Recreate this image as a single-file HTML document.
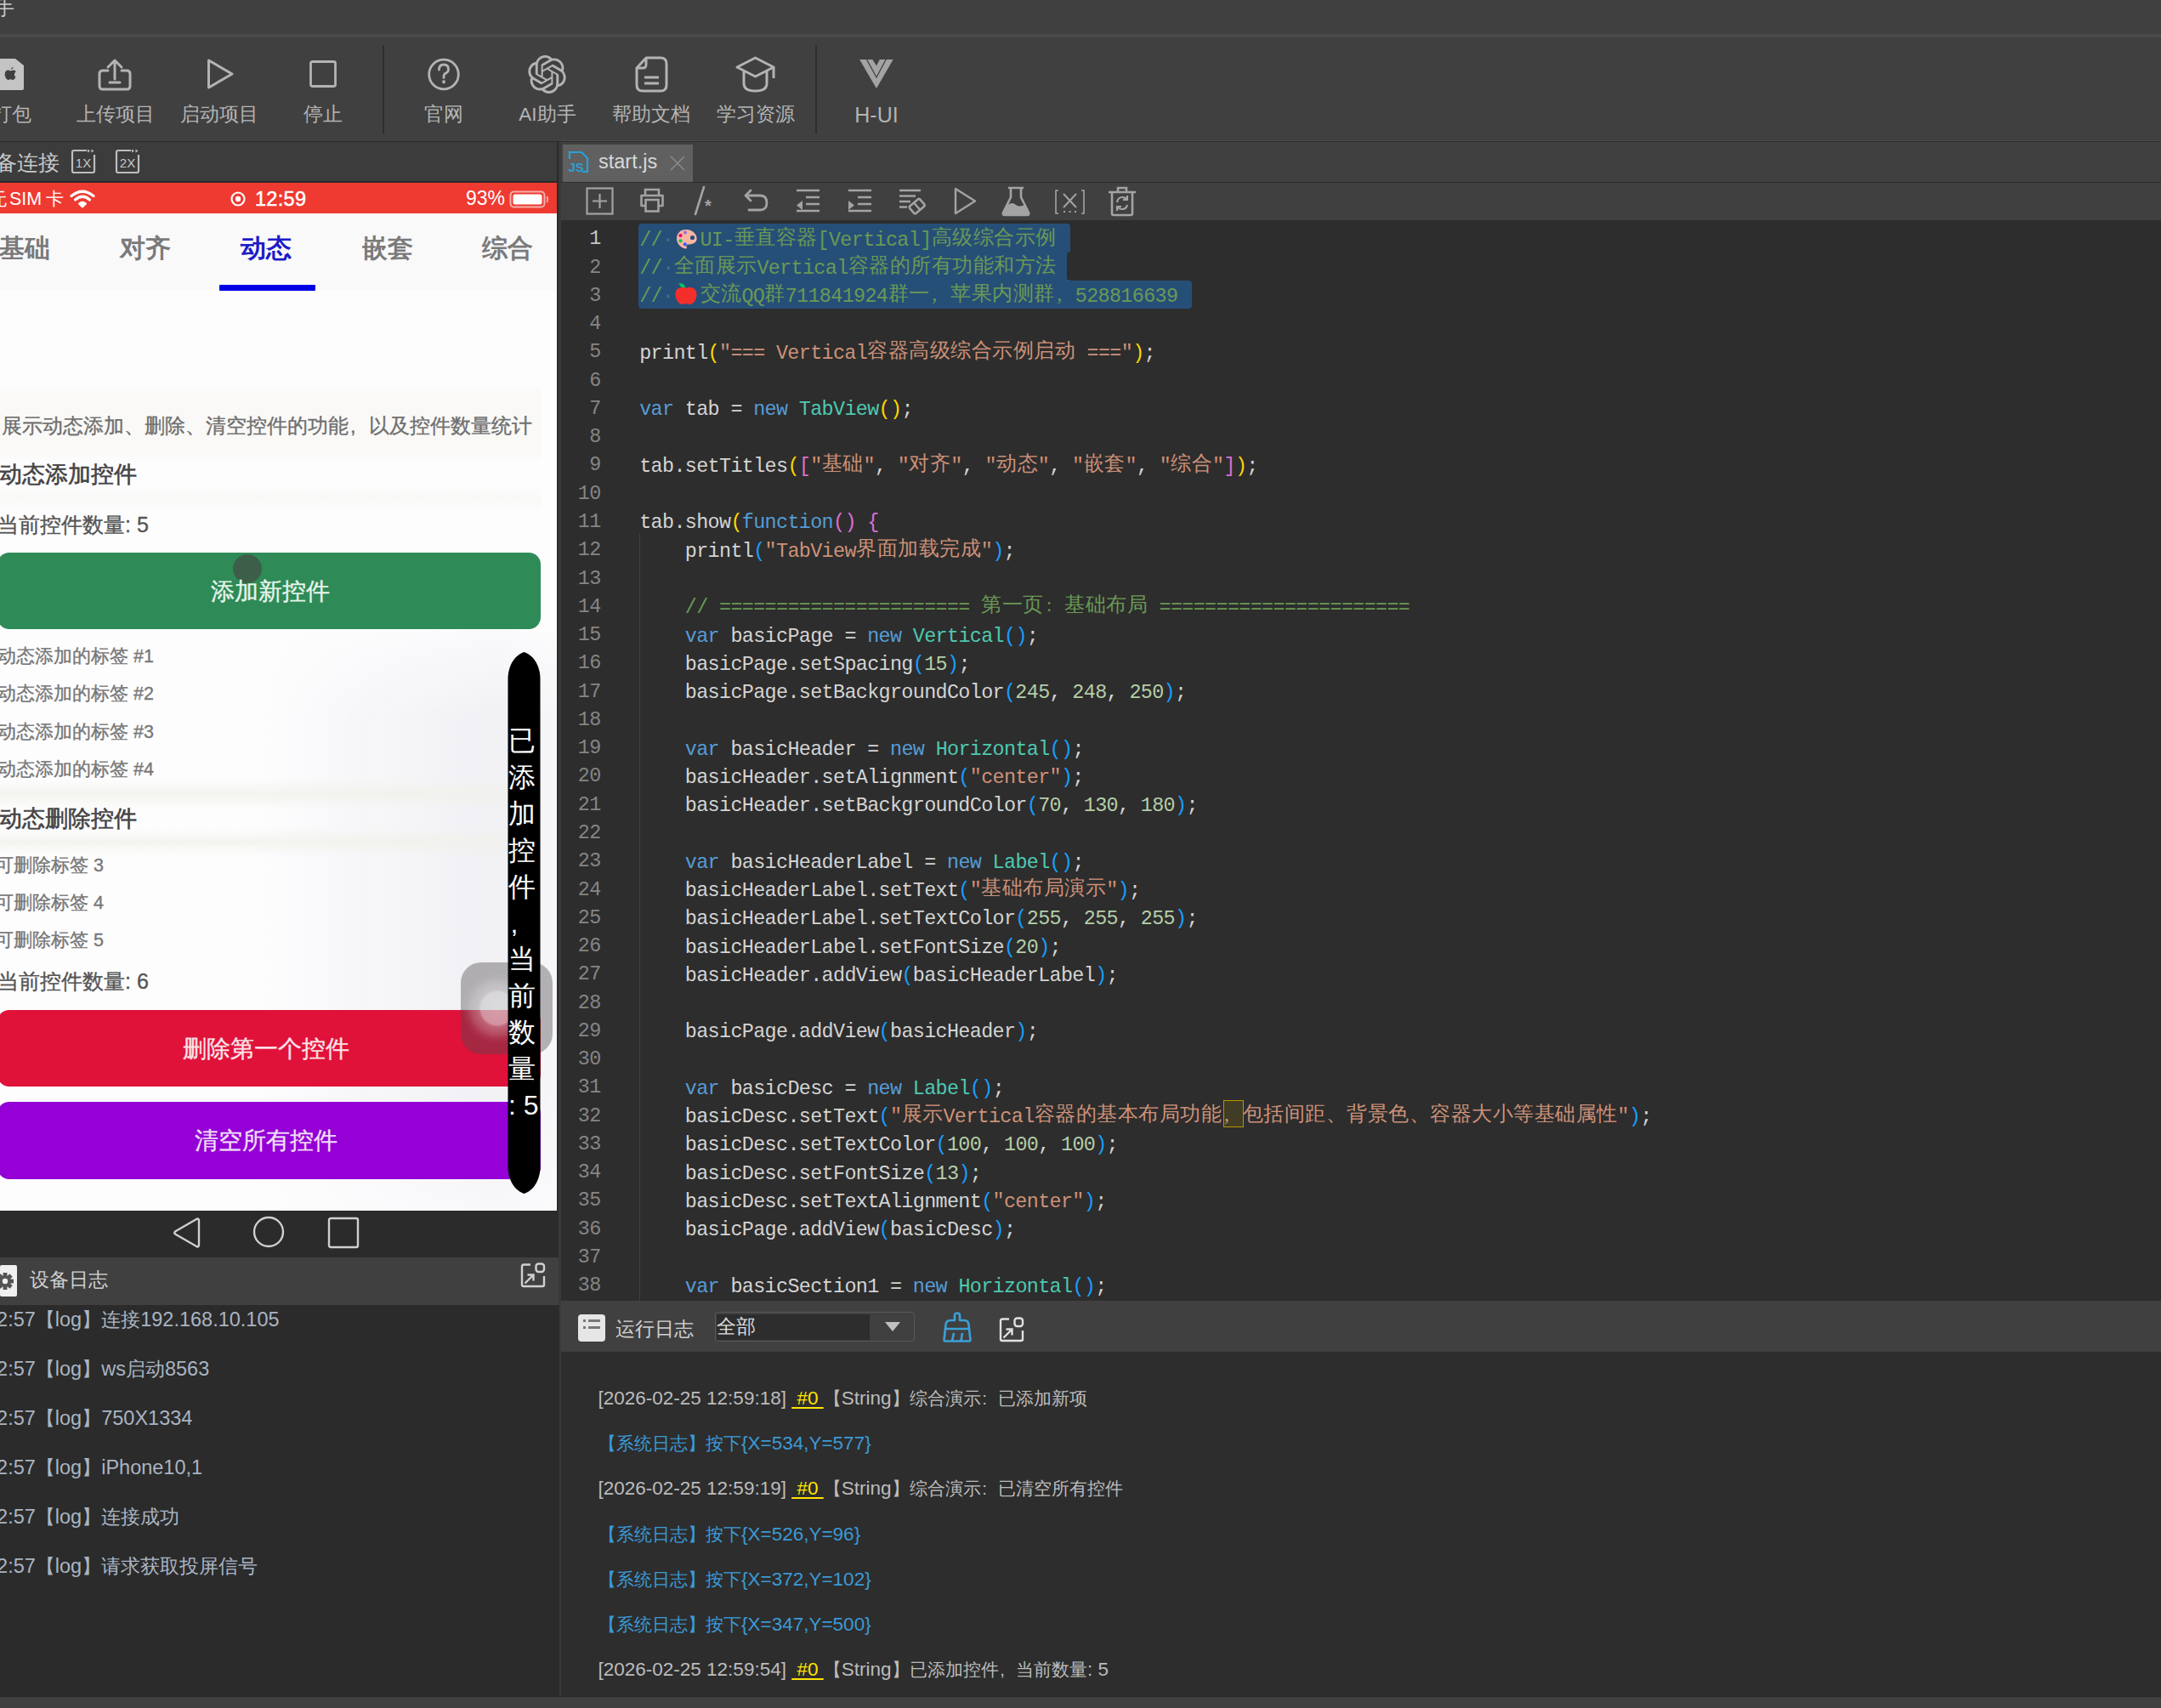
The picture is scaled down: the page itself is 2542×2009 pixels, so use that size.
<!DOCTYPE html>
<html><head><meta charset="utf-8"><style>
*{margin:0;padding:0;box-sizing:border-box}
html,body{width:2542px;height:2009px;overflow:hidden;background:#2d2d2d}
body{position:relative;font-family:"Liberation Sans",sans-serif}
.abs{position:absolute;display:block}
.ui{font-family:"Liberation Sans",sans-serif;white-space:nowrap}
.tlab{position:absolute;top:117.5px;width:160px;text-align:center;font-size:22.5px;line-height:34px;color:#b4b4b4;white-space:nowrap}
.ln{position:absolute;left:661px;width:45.6px;margin-top:2.3px;text-align:right;font-family:"Liberation Mono",monospace;font-size:23.4px;letter-spacing:-0.64px;line-height:33.27px;height:33.27px;color:#858585}
.ln.cur{color:#c6c6c6}
.cl{position:absolute;left:752.2px;margin-top:3.8px;font-family:"Liberation Mono",monospace;font-size:23.4px;letter-spacing:-0.64px;line-height:33.27px;height:33.27px;white-space:pre;color:#d4d4d4}
.cl .k{font-family:"Liberation Serif",serif;font-size:24px;letter-spacing:0;display:inline-block;height:33.27px;vertical-align:top;line-height:33.27px;position:relative;top:-4px}
.cl .k i.p{text-align:left;padding-left:3px}
.cl .k i{display:inline-block;width:24.5px;height:33.27px;line-height:33.27px;vertical-align:top;text-align:center;font-style:normal}
.cl .ws{color:#4d6a85;display:inline-block;width:13.4px;text-align:left;letter-spacing:0}
.cl .emo{display:inline-block;width:31px;font-size:21px;text-align:left;vertical-align:top;line-height:33px;padding-left:2px}
.rlog .c{font-size:0.915em}
.dlog .c{font-size:0.96em}
.rlog{position:absolute;font-size:22.5px;line-height:40px;color:#bcbcbc;white-space:nowrap}
.rlog.sys{color:#3b9ad6}
.rlog .tag{color:#ffe300;text-decoration:underline;text-underline-offset:3px}
.dlog{position:absolute;left:-17px;font-size:23.5px;line-height:40px;color:#a9b4c2;white-space:nowrap}
.pp{display:inline-block;width:1em;text-align:left;padding-left:0.08em}
.ptxt{position:absolute;white-space:nowrap;left:0;-webkit-text-stroke:0.35px currentColor}
</style></head><body>
<!-- title bar -->
<div class="abs" style="left:0;top:0;width:2542px;height:40px;background:#404040"></div>
<div class="abs ui" style="left:-6px;top:-8px;font-size:23px;line-height:34px;color:#c8c8c8">手</div>
<div class="abs" style="left:0;top:40px;width:2542px;height:4px;background:#4a4a4a"></div>
<!-- toolbar -->
<div class="abs" style="left:0;top:44px;width:2542px;height:122px;background:#404040"></div>
<div class="abs" style="left:450px;top:53px;width:2px;height:104px;background:#2e2e2e"></div>
<div class="abs" style="left:959px;top:53px;width:2px;height:104px;background:#2e2e2e"></div>
<svg class="abs" style="left:-10px;top:69px" width="40" height="37" viewBox="0 0 40 37" ><path d="M0 2 Q0 0 2 0 L28 0 L38 8 L38 35 Q38 37 36 37 L2 37 Q0 37 0 35 Z" fill="#c4c4c4"/><g transform="translate(15.5 10) scale(1.25)"><path d="M8.2 0 c-1 0.1 -2.2 0.7 -2.6 1.9 c1.1 0.1 2.2 -0.6 2.6 -1.9z M10.4 9 c-0.5 1.3 -1.4 2.9 -2.6 2.9 c-0.9 0 -1.2 -0.6 -2.3 -0.6 c-1.1 0 -1.4 0.6 -2.3 0.6 c-1.3 0 -3.1 -2.6 -3.1 -5.3 c0 -2.5 1.6 -3.8 3.1 -3.8 c0.9 0 1.7 0.6 2.3 0.6 c0.6 0 1.4 -0.7 2.5 -0.7 c0.5 0 1.9 0.1 2.7 1.4 c-2.2 1.3 -1.8 4.3 -0.3 4.9z" fill="#404040"/></g></svg>
<svg class="abs" style="left:114px;top:68px" width="42" height="40" viewBox="0 0 42 40" ><g fill="none" stroke="#b3b3b3" stroke-width="3" stroke-linecap="round" stroke-linejoin="round"><path d="M13 15 H7 Q3 15 3 19 V33 Q3 37 7 37 H35 Q39 37 39 33 V19 Q39 15 35 15 H29"/><path d="M21 25 V4 M13 11 L21 3 L29 11"/><path d="M15 29 H27"/></g></svg>
<svg class="abs" style="left:240px;top:66px" width="38" height="42" viewBox="0 0 38 42" ><path d="M5.5 5 L33 21 L5.5 37 Z" fill="none" stroke="#b3b3b3" stroke-width="3" stroke-linejoin="round"/></svg>
<svg class="abs" style="left:362px;top:70px" width="36" height="36" viewBox="0 0 36 36" ><rect x="3.5" y="2.5" width="29" height="29" rx="2" fill="none" stroke="#b3b3b3" stroke-width="2.8"/></svg>
<svg class="abs" style="left:501px;top:66px" width="42" height="42" viewBox="0 0 42 42" ><circle cx="21" cy="21.5" r="17.3" fill="none" stroke="#b3b3b3" stroke-width="2.8"/><path d="M15.5 16 Q15.5 10 21 10 Q26.5 10 26.5 15.5 Q26.5 19 22.5 20.5 Q21 21.5 21 24 V25.5" fill="none" stroke="#b3b3b3" stroke-width="2.8" stroke-linecap="round"/><rect x="19.3" y="28.5" width="3.4" height="3.6" fill="#b3b3b3"/></svg>
<svg class="abs" style="left:621px;top:65px" width="45" height="45" viewBox="0 0 24 24" ><path fill="#b3b3b3" d="M22.2819 9.8211a5.9847 5.9847 0 0 0-.5157-4.9108 6.0462 6.0462 0 0 0-6.5098-2.9A6.0651 6.0651 0 0 0 4.9807 4.1818a5.9847 5.9847 0 0 0-3.9977 2.9 6.0462 6.0462 0 0 0 .7427 7.0966 5.98 5.98 0 0 0 .511 4.9107 6.051 6.051 0 0 0 6.5146 2.9001A5.9847 5.9847 0 0 0 13.2599 24a6.0557 6.0557 0 0 0 5.7718-4.2058 5.9894 5.9894 0 0 0 3.9977-2.9001 6.0557 6.0557 0 0 0-.7475-7.0729zm-9.022 12.6081a4.4755 4.4755 0 0 1-2.8764-1.0408l.1419-.0804 4.7783-2.7582a.7948.7948 0 0 0 .3927-.6813v-6.7369l2.02 1.1686a.071.071 0 0 1 .038.052v5.5826a4.504 4.504 0 0 1-4.4945 4.4944zm-9.6607-4.1254a4.4708 4.4708 0 0 1-.5346-3.0137l.142.0852 4.783 2.7582a.7712.7712 0 0 0 .7806 0l5.8428-3.3685v2.3324a.0804.0804 0 0 1-.0332.0615L9.74 19.9502a4.4992 4.4992 0 0 1-6.1408-1.6464zM2.3408 7.8956a4.485 4.485 0 0 1 2.3655-1.9728V11.6a.7664.7664 0 0 0 .3879.6765l5.8144 3.3543-2.0201 1.1685a.0757.0757 0 0 1-.071 0l-4.8303-2.7865A4.504 4.504 0 0 1 2.3408 7.872zm16.5963 3.8558L13.1038 8.364 15.1192 7.2a.0757.0757 0 0 1 .071 0l4.8303 2.7913a4.4944 4.4944 0 0 1-.6765 8.1042v-5.6772a.79.79 0 0 0-.407-.667zm2.0107-3.0231l-.142-.0852-4.7735-2.7818a.7759.7759 0 0 0-.7854 0L9.409 9.2297V6.8974a.0662.0662 0 0 1 .0284-.0615l4.8303-2.7866a4.4992 4.4992 0 0 1 6.6802 4.66zM8.3065 12.863l-2.02-1.1638a.0804.0804 0 0 1-.038-.0567V6.0742a4.4992 4.4992 0 0 1 7.3757-3.4537l-.142.0805L8.704 5.459a.7948.7948 0 0 0-.3927.6813zm1.0976-2.3654l2.602-1.4998 2.6069 1.4998v2.9994l-2.5974 1.4997-2.6067-1.4997Z"/></svg>
<svg class="abs" style="left:746px;top:65px" width="41" height="45" viewBox="0 0 41 45" ><path d="M14 3 H31 Q38 3 38 10 V35 Q38 42 31 42 H10 Q3 42 3 35 V15 Z" fill="none" stroke="#b3b3b3" stroke-width="3" stroke-linejoin="round"/><path d="M14 3 V11 Q14 15 10 15 H3" fill="none" stroke="#b3b3b3" stroke-width="3" stroke-linejoin="round"/><path d="M12 26 H29 M12 33 H29" stroke="#b3b3b3" stroke-width="3"/></svg>
<svg class="abs" style="left:864px;top:64px" width="50" height="46" viewBox="0 0 50 46" ><path d="M3 15 L24.5 4 L46 15 L24.5 26 Z" fill="none" stroke="#b3b3b3" stroke-width="3" stroke-linejoin="round"/><path d="M11 20 V34 Q11 43 24.5 43 Q38 43 38 34 V20" fill="none" stroke="#b3b3b3" stroke-width="3"/><path d="M46 15 V28" stroke="#b3b3b3" stroke-width="3"/></svg>
<svg class="abs" style="left:1010px;top:68px" width="42" height="38" viewBox="0 0 42 38" ><path d="M1.1 2.1 L40.6 2.1 L21 35.9 Z" fill="#a3a3a3"/><path d="M16 1.5 L21 9.3 L25.1 1.5 Z" fill="#404040"/><path d="M9.3 1.5 L21 23 L32.4 1.5" fill="none" stroke="#404040" stroke-width="1.3"/></svg>
<div class="tlab" style="left:-66px">打包</div>
<div class="tlab" style="left:56px">上传项目</div>
<div class="tlab" style="left:178px">启动项目</div>
<div class="tlab" style="left:300px">停止</div>
<div class="tlab" style="left:442px">官网</div>
<div class="tlab" style="left:564px">AI助手</div>
<div class="tlab" style="left:686px">帮助文档</div>
<div class="tlab" style="left:809px">学习资源</div>
<div class="tlab" style="left:951px;font-size:25px">H-UI</div>
<div class="abs" style="left:660px;top:165px;width:1882px;height:1.2px;background:#4b4b4b"></div>

<!-- LEFT PANEL -->
<div class="abs" style="left:0;top:167px;width:657px;height:48px;background:#3c3c3c"></div>
<div class="abs ui" style="left:-30px;top:174px;font-size:24.5px;line-height:36px;color:#c8c8c8">设备连接</div>
<svg class="abs" style="left:82px;top:174px" width="32" height="32" viewBox="0 0 32 32" ><path d="M20 3 H5 Q3 3 3 5 V27 Q3 29 5 29 H27 Q29 29 29 27 V8" fill="none" stroke="#bdbdbd" stroke-width="2.2"/><path d="M21 1.5 L24 3.5 L21 5.5 Z M25.5 1.5 L28.5 3.5 L25.5 5.5 Z" fill="#bdbdbd"/><text x="16" y="23" text-anchor="middle" font-family="Liberation Sans" font-size="15" fill="#c8c8c8">1X</text></svg>
<svg class="abs" style="left:134px;top:174px" width="32" height="32" viewBox="0 0 32 32" ><path d="M20 3 H5 Q3 3 3 5 V27 Q3 29 5 29 H27 Q29 29 29 27 V8" fill="none" stroke="#bdbdbd" stroke-width="2.2"/><path d="M21 1.5 L24 3.5 L21 5.5 Z M25.5 1.5 L28.5 3.5 L25.5 5.5 Z" fill="#bdbdbd"/><text x="16" y="23" text-anchor="middle" font-family="Liberation Sans" font-size="15" fill="#c8c8c8">2X</text></svg>
<div class="abs" style="left:655px;top:167px;width:5px;height:1829px;background:#3a3a3a"></div>
<div class="abs" style="left:655px;top:167px;width:2px;height:1312px;background:#2b2b2b"></div>
<div class="abs" style="left:0;top:166px;width:657px;height:1px;background:#2b2b2b"></div>
<div class="abs" style="left:0;top:213px;width:657px;height:2px;background:#2b2b2b"></div>
<!-- status bar -->
<div class="abs" style="left:0;top:215px;width:655px;height:36px;background:#ee3a31"></div>
<div class="abs ui" style="left:-13px;top:217px;font-size:21px;line-height:34px;color:#fff">无</div><div class="abs ui" style="left:11px;top:217px;font-size:21.5px;line-height:34px;color:#fff">SIM</div><div class="abs ui" style="left:54px;top:217px;font-size:21px;line-height:34px;color:#fff">卡</div>
<svg class="abs" style="left:82px;top:222px" width="30" height="24" viewBox="0 0 30 24" ><path d="M2 8.5 Q15 -2 28 8.5" fill="none" stroke="#fff" stroke-width="3.2" stroke-linecap="round"/><path d="M6.5 13 Q15 5.5 23.5 13" fill="none" stroke="#fff" stroke-width="3.2" stroke-linecap="round"/><path d="M11 17.5 Q15 14 19 17.5 L15 21.5 Z" fill="#fff" stroke="#fff" stroke-width="2" stroke-linejoin="round"/></svg>
<svg class="abs" style="left:270px;top:224px" width="20" height="20" viewBox="0 0 20 20" ><circle cx="10" cy="10" r="7.5" fill="none" stroke="#fff" stroke-width="2.2"/><circle cx="10" cy="10" r="3.2" fill="#fff"/></svg>
<div class="abs ui" style="left:300px;top:216.5px;font-size:23.5px;line-height:34px;color:#fff;-webkit-text-stroke:0.5px #fff;letter-spacing:0.3px">12:59</div>
<div class="abs ui" style="left:548px;top:216px;font-size:23px;line-height:34px;color:#fff">93%</div>
<svg class="abs" style="left:599px;top:224px" width="48" height="21" viewBox="0 0 48 21" ><rect x="1.5" y="1.5" width="40" height="18" rx="4" fill="none" stroke="#f6b0ac" stroke-width="2"/><rect x="4.5" y="4.5" width="34" height="12" rx="2" fill="#fff"/><path d="M44.5 7 Q46 10.5 44.5 14" fill="none" stroke="#f6b0ac" stroke-width="2"/></svg>
<!-- tabs -->
<div class="abs" style="left:0;top:251px;width:655px;height:90px;background:#f9f9fa"></div>
<div class="abs" style="left:0;top:341px;width:655px;height:1083px;background:#fdfdfe"></div>
<div class="abs ui" style="left:-1px;top:272px;font-size:30px;line-height:40px;color:#7a7a7a;font-weight:bold">基础</div>
<div class="abs ui" style="left:141px;top:272px;font-size:30px;line-height:40px;color:#7a7a7a;font-weight:bold">对齐</div>
<div class="abs ui" style="left:283px;top:272px;font-size:30px;line-height:40px;color:#1c1cc8;font-weight:bold">动态</div>
<div class="abs ui" style="left:426px;top:272px;font-size:30px;line-height:40px;color:#7a7a7a;font-weight:bold">嵌套</div>
<div class="abs ui" style="left:567px;top:272px;font-size:30px;line-height:40px;color:#7a7a7a;font-weight:bold">综合</div>
<div class="abs" style="left:258px;top:335px;width:113px;height:7px;background:#0000e6;border-radius:1px"></div>
<!-- phone content -->
<div class="abs" style="left:0;top:452px;width:636px;height:92px;background:linear-gradient(rgba(245,243,236,0),rgba(245,243,236,0.4) 12%,rgba(245,243,236,0.4) 88%,rgba(245,243,236,0))"></div>
<div class="ptxt" style="top:484px;left:2px;font-size:23.9px;line-height:34px;color:#6f6f6f">展示动态添加、删除、清空控件的功能<span class="pp">,</span>以及控件数量统计</div>
<div class="abs" style="left:0;top:570px;width:636px;height:33px;background:linear-gradient(rgba(240,240,232,0),rgba(240,240,232,0.35) 50%,rgba(240,240,232,0))"></div>
<div class="ptxt" style="top:540px;left:-1px;font-size:27px;line-height:36px;color:#444;-webkit-text-stroke:0.6px #444">动态添加控件</div>
<div class="ptxt" style="top:599px;left:-3px;font-size:25px;line-height:36px;color:#555">当前控件数量: 5</div>
<div class="abs" style="left:-3px;top:650px;width:639px;height:90px;background:#2e8b57;border-radius:14px"></div>
<div class="abs" style="left:274px;top:652px;width:34px;height:34px;border-radius:50%;background:#3d5e49"></div>
<div class="ptxt" style="top:676px;left:0;width:636px;text-align:center;font-size:27.5px;line-height:40px;color:#e8f5ec">添加新控件</div>
<div class="abs" style="left:300px;top:742px;width:355px;height:682px;background:linear-gradient(to right,rgba(235,235,240,0),rgba(235,235,240,0.7) 80%,rgba(240,240,244,0.5));-webkit-mask-image:linear-gradient(rgba(0,0,0,0.2),#000 15%,#000 80%,rgba(0,0,0,0.3))"></div>
<div class="ptxt" style="top:756px;left:-3px;font-size:21.5px;line-height:32px;color:#777">动态添加的标签 #1</div>
<div class="ptxt" style="top:800px;left:-3px;font-size:21.5px;line-height:32px;color:#777">动态添加的标签 #2</div>
<div class="ptxt" style="top:845px;left:-3px;font-size:21.5px;line-height:32px;color:#777">动态添加的标签 #3</div>
<div class="ptxt" style="top:889px;left:-3px;font-size:21.5px;line-height:32px;color:#777">动态添加的标签 #4</div>
<div class="abs" style="left:0;top:916px;width:600px;height:36px;background:linear-gradient(rgba(240,240,232,0),rgba(240,240,232,0.7) 50%,rgba(240,240,232,0))"></div>
<div class="ptxt" style="top:945px;left:-1px;font-size:27px;line-height:36px;color:#444;-webkit-text-stroke:0.6px #444">动态删除控件</div>
<div class="abs" style="left:0;top:974px;width:600px;height:33px;background:linear-gradient(rgba(240,240,232,0),rgba(240,240,232,0.7) 50%,rgba(240,240,232,0))"></div>
<div class="ptxt" style="top:1002px;left:-6px;font-size:21.5px;line-height:32px;color:#777">可删除标签 3</div>
<div class="ptxt" style="top:1046px;left:-6px;font-size:21.5px;line-height:32px;color:#777">可删除标签 4</div>
<div class="ptxt" style="top:1090px;left:-6px;font-size:21.5px;line-height:32px;color:#777">可删除标签 5</div>
<div class="ptxt" style="top:1136px;left:-3px;font-size:25px;line-height:36px;color:#555">当前控件数量: 6</div>
<div class="abs" style="left:-3px;top:1188px;width:639px;height:90px;background:#e0123a;border-radius:14px"></div>
<div class="ptxt" style="top:1214px;left:0;width:626px;text-align:center;font-size:27.5px;line-height:40px;color:#fbe3e8">删除第一个控件</div>
<div class="abs" style="left:-3px;top:1296px;width:639px;height:91px;background:#9400d6;border-radius:14px"></div>
<div class="ptxt" style="top:1322px;left:0;width:626px;text-align:center;font-size:27.5px;line-height:40px;color:#f1def8">清空所有控件</div>
<!-- assistive touch -->
<div class="abs" style="left:542px;top:1132px;width:108px;height:108px;border-radius:24px;background:rgba(80,72,78,0.40)"></div>
<div class="abs" style="left:543px;top:1144px;width:84px;height:84px;border-radius:50%;background:radial-gradient(circle,rgba(255,255,255,0.55) 0,rgba(255,255,255,0.5) 19px,rgba(255,255,255,0.28) 22px,rgba(255,255,255,0.18) 30px,rgba(255,255,255,0.06) 36px,rgba(255,255,255,0) 42px)"></div>
<!-- toast -->
<svg class="abs" style="left:597px;top:767px" width="39" height="637" viewBox="0 0 39 637"><path d="M19.5 0 C27 2.5 37.5 11 38.5 30 L38.5 607 C37.5 626 27 634.5 19.5 637 C12 634.5 1.5 626 0.5 607 L0.5 30 C1.5 11 12 2.5 19.5 0 Z" fill="#000"/></svg>
<div class="abs" style="left:598px;top:850px;width:39px;font-size:32px;line-height:42.9px;color:#fff;text-align:left;white-space:nowrap"><div>已</div><div>添</div><div>加</div><div>控</div><div>件</div><div><span class="pp">,</span></div><div>当</div><div>前</div><div>数</div><div>量</div><div>: 5</div></div>
<!-- nav bar -->
<div class="abs" style="left:0;top:1424px;width:655px;height:55px;background:#2b2b2b"></div>
<svg class="abs" style="left:202px;top:1431px" width="36" height="38" viewBox="0 0 36 38" ><path d="M30 2.5 Q32 2.5 32 5 V33 Q32 35.5 30 35.5 L4 20.5 Q2.5 19 4 17.5 Z" fill="none" stroke="#cfcfcf" stroke-width="2.4" stroke-linejoin="round"/></svg><svg class="abs" style="left:297px;top:1430px" width="38" height="38" viewBox="0 0 38 38" ><circle cx="19" cy="19" r="17" fill="none" stroke="#cfcfcf" stroke-width="2.4"/></svg><svg class="abs" style="left:385px;top:1431px" width="38" height="38" viewBox="0 0 38 38" ><rect x="2" y="2" width="34" height="34" rx="2" fill="none" stroke="#cfcfcf" stroke-width="2.4"/></svg>
<!-- device log header -->
<div class="abs" style="left:0;top:1479px;width:657px;height:56px;background:#404040"></div>
<div class="abs" style="left:0;top:1488px;width:20px;height:37px;background:#f0f0f0;border-radius:2px"></div>
<svg class="abs" style="left:-6px;top:1495px" width="24" height="24" viewBox="0 0 24 24" ><g transform="translate(12 12)" fill="#555"><rect x="-2.4" y="-10" width="4.8" height="6" transform="rotate(0)"/><rect x="-2.4" y="-10" width="4.8" height="6" transform="rotate(45)"/><rect x="-2.4" y="-10" width="4.8" height="6" transform="rotate(90)"/><rect x="-2.4" y="-10" width="4.8" height="6" transform="rotate(135)"/><rect x="-2.4" y="-10" width="4.8" height="6" transform="rotate(180)"/><rect x="-2.4" y="-10" width="4.8" height="6" transform="rotate(225)"/><rect x="-2.4" y="-10" width="4.8" height="6" transform="rotate(270)"/><rect x="-2.4" y="-10" width="4.8" height="6" transform="rotate(315)"/><circle r="7"/></g><circle cx="12" cy="12" r="3.2" fill="#f0f0f0"/></svg>
<div class="abs ui" style="left:35px;top:1488px;font-size:22.5px;line-height:36px;color:#cfcfcf">设备日志</div>
<svg class="abs" style="left:611px;top:1484px" width="32" height="32" viewBox="0 0 32 32" ><path d="M13 3.5 H5 Q3 3.5 3 5.5 V27 Q3 29 5 29 H27 Q29 29 29 27 V17" fill="none" stroke="#d0d0d0" stroke-width="2.4"/><rect x="19.5" y="2.5" width="9.5" height="9.5" rx="3" fill="none" stroke="#d0d0d0" stroke-width="2.4"/><path d="M6.5 25.5 L16.5 15.5 M9.5 15.5 H16.5 V22.5" fill="none" stroke="#d0d0d0" stroke-width="2.4"/></svg>
<div class="abs" style="left:0;top:1535px;width:658px;height:460px;background:#2b2b2b"></div>
<div class="dlog" style="top:1532.0px">12:57<span class="c">【</span>log<span class="c">】连接</span>192.168.10.105</div>
<div class="dlog" style="top:1589.9px">12:57<span class="c">【</span>log<span class="c">】</span>ws<span class="c">启动</span>8563</div>
<div class="dlog" style="top:1647.8px">12:57<span class="c">【</span>log<span class="c">】</span>750X1334</div>
<div class="dlog" style="top:1705.7px">12:57<span class="c">【</span>log<span class="c">】</span>iPhone10,1</div>
<div class="dlog" style="top:1763.6px">12:57<span class="c">【</span>log<span class="c">】连接成功</span></div>
<div class="dlog" style="top:1821.5px">12:57<span class="c">【</span>log<span class="c">】请求获取投屏信号</span></div>

<!-- EDITOR -->
<div class="abs" style="left:660px;top:167px;width:1882px;height:48px;background:#404040"></div>
<div class="abs" style="left:661.5px;top:170px;width:153.5px;height:43.5px;background:#606060"></div>
<svg class="abs" style="left:667px;top:176px" width="30" height="30" viewBox="0 0 30 30" ><path d="M3 11 V3 H17 L24 10 V26 H18" fill="none" stroke="#2a9fd8" stroke-width="2.2"/><text x="1.5" y="25.5" font-family="Liberation Sans" font-weight="bold" font-size="15" fill="#2a9fd8">JS</text></svg>
<div class="abs ui" style="left:704px;top:172px;font-size:23.5px;line-height:36px;color:#d8d8d8">start.js</div>
<svg class="abs" style="left:787px;top:182px" width="20" height="20" viewBox="0 0 20 20" ><path d="M2 2 L18 18 M18 2 L2 18" stroke="#8a8a8a" stroke-width="1.6"/></svg>
<div class="abs" style="left:660px;top:213.5px;width:1882px;height:1.2px;background:#2e2e2e"></div>
<div class="abs" style="left:660px;top:214.7px;width:1882px;height:44.3px;background:#404040"></div>
<svg class="abs" style="left:688px;top:219px" width="35" height="35" viewBox="0 0 35 35" ><rect x="2.5" y="2.5" width="30" height="30" fill="none" stroke="#a3a3a3" stroke-width="2.2"/><path d="M9 17.5 H26 M17.5 9 V26" stroke="#a3a3a3" stroke-width="2.2"/></svg>
<svg class="abs" style="left:752px;top:220px" width="30" height="32" viewBox="0 0 30 32" ><path d="M7 9 V3 H23 V9" fill="none" stroke="#a3a3a3" stroke-width="2.6"/><path d="M7 22 H2.5 V10 H27.5 V22 H23" fill="none" stroke="#a3a3a3" stroke-width="2.6" stroke-linejoin="round"/><rect x="7.5" y="15" width="15" height="13.5" fill="none" stroke="#a3a3a3" stroke-width="2.6"/></svg>
<svg class="abs" style="left:814px;top:218px" width="30" height="36" viewBox="0 0 30 36" ><path d="M4 34 L14 2" stroke="#a3a3a3" stroke-width="2.6" stroke-linecap="round"/><text x="15" y="31" font-family="Liberation Sans" font-weight="bold" font-size="20" fill="#a3a3a3">*</text></svg>
<svg class="abs" style="left:874px;top:221px" width="32" height="30" viewBox="0 0 32 30" ><path d="M9 3 L3 9 L9 15" fill="none" stroke="#a3a3a3" stroke-width="2.8" stroke-linecap="round" stroke-linejoin="round"/><path d="M3.5 9 H20 Q28 9 28 17.5 Q28 26 20 26 H7" fill="none" stroke="#a3a3a3" stroke-width="2.8" stroke-linecap="round"/></svg>
<svg class="abs" style="left:936px;top:222px" width="30" height="28" viewBox="0 0 30 28" ><path d="M1 2 H28 M12 10 H28 M12 18 H28 M12 26 H28 M1 26 H28" stroke="#a3a3a3" stroke-width="2.6"/><path d="M8 14 L1 19.5 L8 25 Z" fill="#a3a3a3"/></svg>
<svg class="abs" style="left:997px;top:222px" width="30" height="28" viewBox="0 0 30 28" ><path d="M1 2 H28 M12 10 H28 M12 18 H28 M12 26 H28 M1 26 H28" stroke="#a3a3a3" stroke-width="2.6"/><path d="M1 14 L8 19.5 L1 25 Z" fill="#a3a3a3"/></svg>
<svg class="abs" style="left:1057px;top:221px" width="34" height="33" viewBox="0 0 34 33" ><path d="M1 3 H26 M1 9.5 H20 M1 16 H14 M1 22.5 H10" stroke="#a3a3a3" stroke-width="2.6"/><g transform="rotate(-40 22 22)"><rect x="14" y="16" width="16" height="11" rx="2" fill="none" stroke="#a3a3a3" stroke-width="2.6"/><path d="M22 16 V27" stroke="#a3a3a3" stroke-width="2.4"/></g></svg>
<svg class="abs" style="left:1121px;top:219px" width="29" height="35" viewBox="0 0 29 35" ><path d="M3 3 L26 17.5 L3 32 Z" fill="none" stroke="#a3a3a3" stroke-width="2.4" stroke-linejoin="round"/></svg>
<svg class="abs" style="left:1177px;top:218px" width="36" height="38" viewBox="0 0 36 38" ><path d="M9 3 H27 M12 3 V14 L3 32 Q2 35 5 35 H31 Q34 35 33 32 L24 14 V3" fill="none" stroke="#a3a3a3" stroke-width="2.6" stroke-linejoin="round"/><path d="M8 23 Q14 19 18 23 Q22 26 28 23 L33 32 Q34 35 31 35 H5 Q2 35 3 32 Z" fill="#a3a3a3"/></svg>
<svg class="abs" style="left:1240px;top:222px" width="37" height="32" viewBox="0 0 37 32" ><path d="M5 2 H2 V29 H5 M32 2 H35 V29 H32" fill="none" stroke="#a3a3a3" stroke-width="1.6"/><path d="M11 6 L26 22 M26 6 L11 22" stroke="#a3a3a3" stroke-width="2"/><path d="M11 27 H13 M17.5 27 H19.5 M24 27 H26" stroke="#a3a3a3" stroke-width="2"/></svg>
<svg class="abs" style="left:1303px;top:218px" width="34" height="37" viewBox="0 0 34 37" ><path d="M1 8 H33 M12 8 V3 H22 V8" fill="none" stroke="#a3a3a3" stroke-width="2.6"/><path d="M5 8 V33 Q5 35 7 35 H27 Q29 35 29 33 V8" fill="none" stroke="#a3a3a3" stroke-width="2.6"/><path d="M11 20 Q12 14 17 14 Q21 14 23 17 M23 12 V17 H18 M23 23 Q22 28 17 28 Q13 28 11 25 M11 30 V25 H16" fill="none" stroke="#a3a3a3" stroke-width="2.2"/></svg>
<div class="abs" style="left:660px;top:259px;width:1882px;height:1271px;background:#2d2d2d"></div>
<!-- selection -->
<div class="abs" style="left:751px;top:263px;width:508px;height:66.6px;background:#264f78;border-radius:4px 4px 0 0"></div>
<div class="abs" style="left:751px;top:329.54px;width:651px;height:33.27px;background:#264f78;border-radius:0 4px 4px 4px"></div>
<div class="abs" style="left:1254.7px;top:296.3px;width:4px;height:33px;background:#2d2d2d;border-radius:4px 0 0 0"></div>
<!-- indent guide -->
<div class="abs" style="left:752px;top:628px;width:1px;height:902px;background:#404040"></div>
<!-- unicode highlight -->
<div class="abs" style="left:1439px;top:1294px;width:24px;height:32px;border:1.5px solid #b89500;background:rgba(184,149,0,0.15)"></div>
<div class="ln cur" style="top:263.00px">1</div>
<div class="cl" style="top:263.00px"><span style="color:#6a9955">//</span><span class="ws">·</span><span class="emo"><svg width="26" height="25" viewBox="0 0 26 25" style="vertical-align:top;margin-top:2.5px;margin-left:1px"><path d="M12 1 C5 1 1 6 1 11.5 C1 17 5 22 11 23.5 C13 24 13.5 22.5 12.5 21 C12 19.5 13 18.5 14.5 18.5 C18 18.5 23.5 17.5 24.5 13 C25.5 8 21 1 12 1 Z" fill="#f7b5a3"/><circle cx="19.5" cy="10.5" r="2.6" fill="#264f78"/><circle cx="11" cy="4.5" r="2" fill="#9b6bd6"/><circle cx="5.5" cy="8" r="2.1" fill="#e6006e"/><circle cx="5.5" cy="14.3" r="2.1" fill="#00c853"/><circle cx="10.8" cy="18.3" r="2.1" fill="#3d5afe"/></svg></span><span style="color:#6a9955">UI-</span><span class="k" style="color:#6a9955"><i>垂</i><i>直</i><i>容</i><i>器</i></span><span style="color:#6a9955">[Vertical]</span><span class="k" style="color:#6a9955"><i>高</i><i>级</i><i>综</i><i>合</i><i>示</i><i>例</i></span></div>
<div class="ln" style="top:296.27px">2</div>
<div class="cl" style="top:296.27px"><span style="color:#6a9955">//</span><span class="ws">·</span><span class="k" style="color:#6a9955"><i>全</i><i>面</i><i>展</i><i>示</i></span><span style="color:#6a9955">Vertical</span><span class="k" style="color:#6a9955"><i>容</i><i>器</i><i>的</i><i>所</i><i>有</i><i>功</i><i>能</i><i>和</i><i>方</i><i>法</i></span></div>
<div class="ln" style="top:329.54px">3</div>
<div class="cl" style="top:329.54px"><span style="color:#6a9955">//</span><span class="ws">·</span><span class="emo"><svg width="26" height="26" viewBox="0 0 26 26" style="vertical-align:top;margin-top:0px;margin-left:0px"><path d="M4.5 0.5 Q10.5 -0.5 12.5 5.5 Q6.5 6 4.5 0.5 Z" fill="#00c862"/><path d="M13 6 C10 4 0.5 4.5 0.5 13 C0.5 19.5 4.5 25 8.5 25 C10.5 25 11.5 24 13 24 C14.5 24 15.5 25 17.5 25 C21.5 25 25.5 19.5 25.5 13 C25.5 4.5 16 4 13 6 Z" fill="#f42f2b"/></svg></span><span class="k" style="color:#6a9955"><i>交</i><i>流</i></span><span style="color:#6a9955">QQ</span><span class="k" style="color:#6a9955"><i>群</i></span><span style="color:#6a9955">711841924</span><span class="k" style="color:#6a9955"><i>群</i><i>一</i><i class="p">,</i><i>苹</i><i>果</i><i>内</i><i>测</i><i>群</i><i class="p">,</i></span><span style="color:#6a9955">528816639</span></div>
<div class="ln" style="top:362.81px">4</div>
<div class="ln" style="top:396.08px">5</div>
<div class="cl" style="top:396.08px"><span style="color:#d4d4d4">printl</span><span style="color:#ffd700">(</span><span style="color:#ce9178">"=== Vertical</span><span class="k" style="color:#ce9178"><i>容</i><i>器</i><i>高</i><i>级</i><i>综</i><i>合</i><i>示</i><i>例</i><i>启</i><i>动</i></span><span style="color:#ce9178"> ==="</span><span style="color:#ffd700">)</span><span style="color:#d4d4d4">;</span></div>
<div class="ln" style="top:429.35px">6</div>
<div class="ln" style="top:462.62px">7</div>
<div class="cl" style="top:462.62px"><span style="color:#569cd6">var</span><span style="color:#d4d4d4"> </span><span style="color:#d4d4d4">tab</span><span style="color:#d4d4d4"> </span><span style="color:#d4d4d4">=</span><span style="color:#d4d4d4"> </span><span style="color:#569cd6">new</span><span style="color:#d4d4d4"> </span><span style="color:#4ec9b0">TabView</span><span style="color:#ffd700">(</span><span style="color:#ffd700">)</span><span style="color:#d4d4d4">;</span></div>
<div class="ln" style="top:495.89px">8</div>
<div class="ln" style="top:529.16px">9</div>
<div class="cl" style="top:529.16px"><span style="color:#d4d4d4">tab</span><span style="color:#d4d4d4">.</span><span style="color:#d4d4d4">setTitles</span><span style="color:#ffd700">(</span><span style="color:#da70d6">[</span><span style="color:#ce9178">"</span><span class="k" style="color:#ce9178"><i>基</i><i>础</i></span><span style="color:#ce9178">"</span><span style="color:#d4d4d4">,</span><span style="color:#d4d4d4"> </span><span style="color:#ce9178">"</span><span class="k" style="color:#ce9178"><i>对</i><i>齐</i></span><span style="color:#ce9178">"</span><span style="color:#d4d4d4">,</span><span style="color:#d4d4d4"> </span><span style="color:#ce9178">"</span><span class="k" style="color:#ce9178"><i>动</i><i>态</i></span><span style="color:#ce9178">"</span><span style="color:#d4d4d4">,</span><span style="color:#d4d4d4"> </span><span style="color:#ce9178">"</span><span class="k" style="color:#ce9178"><i>嵌</i><i>套</i></span><span style="color:#ce9178">"</span><span style="color:#d4d4d4">,</span><span style="color:#d4d4d4"> </span><span style="color:#ce9178">"</span><span class="k" style="color:#ce9178"><i>综</i><i>合</i></span><span style="color:#ce9178">"</span><span style="color:#da70d6">]</span><span style="color:#ffd700">)</span><span style="color:#d4d4d4">;</span></div>
<div class="ln" style="top:562.43px">10</div>
<div class="ln" style="top:595.70px">11</div>
<div class="cl" style="top:595.70px"><span style="color:#d4d4d4">tab</span><span style="color:#d4d4d4">.</span><span style="color:#d4d4d4">show</span><span style="color:#ffd700">(</span><span style="color:#569cd6">function</span><span style="color:#da70d6">(</span><span style="color:#da70d6">)</span><span style="color:#d4d4d4"> </span><span style="color:#da70d6">{</span></div>
<div class="ln" style="top:628.97px">12</div>
<div class="cl" style="top:628.97px"><span style="color:#d4d4d4"> </span><span style="color:#d4d4d4"> </span><span style="color:#d4d4d4"> </span><span style="color:#d4d4d4"> </span><span style="color:#d4d4d4">printl</span><span style="color:#179fff">(</span><span style="color:#ce9178">"TabView</span><span class="k" style="color:#ce9178"><i>界</i><i>面</i><i>加</i><i>载</i><i>完</i><i>成</i></span><span style="color:#ce9178">"</span><span style="color:#179fff">)</span><span style="color:#d4d4d4">;</span></div>
<div class="ln" style="top:662.24px">13</div>
<div class="ln" style="top:695.51px">14</div>
<div class="cl" style="top:695.51px"><span style="color:#d4d4d4"> </span><span style="color:#d4d4d4"> </span><span style="color:#d4d4d4"> </span><span style="color:#d4d4d4"> </span><span style="color:#6a9955">// ====================== </span><span class="k" style="color:#6a9955"><i>第</i><i>一</i><i>页</i><i class="p">:</i><i>基</i><i>础</i><i>布</i><i>局</i></span><span style="color:#6a9955"> ======================</span></div>
<div class="ln" style="top:728.78px">15</div>
<div class="cl" style="top:728.78px"><span style="color:#d4d4d4"> </span><span style="color:#d4d4d4"> </span><span style="color:#d4d4d4"> </span><span style="color:#d4d4d4"> </span><span style="color:#569cd6">var</span><span style="color:#d4d4d4"> </span><span style="color:#d4d4d4">basicPage</span><span style="color:#d4d4d4"> </span><span style="color:#d4d4d4">=</span><span style="color:#d4d4d4"> </span><span style="color:#569cd6">new</span><span style="color:#d4d4d4"> </span><span style="color:#4ec9b0">Vertical</span><span style="color:#179fff">(</span><span style="color:#179fff">)</span><span style="color:#d4d4d4">;</span></div>
<div class="ln" style="top:762.05px">16</div>
<div class="cl" style="top:762.05px"><span style="color:#d4d4d4"> </span><span style="color:#d4d4d4"> </span><span style="color:#d4d4d4"> </span><span style="color:#d4d4d4"> </span><span style="color:#d4d4d4">basicPage</span><span style="color:#d4d4d4">.</span><span style="color:#d4d4d4">setSpacing</span><span style="color:#179fff">(</span><span style="color:#b5cea8">15</span><span style="color:#179fff">)</span><span style="color:#d4d4d4">;</span></div>
<div class="ln" style="top:795.32px">17</div>
<div class="cl" style="top:795.32px"><span style="color:#d4d4d4"> </span><span style="color:#d4d4d4"> </span><span style="color:#d4d4d4"> </span><span style="color:#d4d4d4"> </span><span style="color:#d4d4d4">basicPage</span><span style="color:#d4d4d4">.</span><span style="color:#d4d4d4">setBackgroundColor</span><span style="color:#179fff">(</span><span style="color:#b5cea8">245</span><span style="color:#d4d4d4">,</span><span style="color:#d4d4d4"> </span><span style="color:#b5cea8">248</span><span style="color:#d4d4d4">,</span><span style="color:#d4d4d4"> </span><span style="color:#b5cea8">250</span><span style="color:#179fff">)</span><span style="color:#d4d4d4">;</span></div>
<div class="ln" style="top:828.59px">18</div>
<div class="ln" style="top:861.86px">19</div>
<div class="cl" style="top:861.86px"><span style="color:#d4d4d4"> </span><span style="color:#d4d4d4"> </span><span style="color:#d4d4d4"> </span><span style="color:#d4d4d4"> </span><span style="color:#569cd6">var</span><span style="color:#d4d4d4"> </span><span style="color:#d4d4d4">basicHeader</span><span style="color:#d4d4d4"> </span><span style="color:#d4d4d4">=</span><span style="color:#d4d4d4"> </span><span style="color:#569cd6">new</span><span style="color:#d4d4d4"> </span><span style="color:#4ec9b0">Horizontal</span><span style="color:#179fff">(</span><span style="color:#179fff">)</span><span style="color:#d4d4d4">;</span></div>
<div class="ln" style="top:895.13px">20</div>
<div class="cl" style="top:895.13px"><span style="color:#d4d4d4"> </span><span style="color:#d4d4d4"> </span><span style="color:#d4d4d4"> </span><span style="color:#d4d4d4"> </span><span style="color:#d4d4d4">basicHeader</span><span style="color:#d4d4d4">.</span><span style="color:#d4d4d4">setAlignment</span><span style="color:#179fff">(</span><span style="color:#ce9178">"center"</span><span style="color:#179fff">)</span><span style="color:#d4d4d4">;</span></div>
<div class="ln" style="top:928.40px">21</div>
<div class="cl" style="top:928.40px"><span style="color:#d4d4d4"> </span><span style="color:#d4d4d4"> </span><span style="color:#d4d4d4"> </span><span style="color:#d4d4d4"> </span><span style="color:#d4d4d4">basicHeader</span><span style="color:#d4d4d4">.</span><span style="color:#d4d4d4">setBackgroundColor</span><span style="color:#179fff">(</span><span style="color:#b5cea8">70</span><span style="color:#d4d4d4">,</span><span style="color:#d4d4d4"> </span><span style="color:#b5cea8">130</span><span style="color:#d4d4d4">,</span><span style="color:#d4d4d4"> </span><span style="color:#b5cea8">180</span><span style="color:#179fff">)</span><span style="color:#d4d4d4">;</span></div>
<div class="ln" style="top:961.67px">22</div>
<div class="ln" style="top:994.94px">23</div>
<div class="cl" style="top:994.94px"><span style="color:#d4d4d4"> </span><span style="color:#d4d4d4"> </span><span style="color:#d4d4d4"> </span><span style="color:#d4d4d4"> </span><span style="color:#569cd6">var</span><span style="color:#d4d4d4"> </span><span style="color:#d4d4d4">basicHeaderLabel</span><span style="color:#d4d4d4"> </span><span style="color:#d4d4d4">=</span><span style="color:#d4d4d4"> </span><span style="color:#569cd6">new</span><span style="color:#d4d4d4"> </span><span style="color:#4ec9b0">Label</span><span style="color:#179fff">(</span><span style="color:#179fff">)</span><span style="color:#d4d4d4">;</span></div>
<div class="ln" style="top:1028.21px">24</div>
<div class="cl" style="top:1028.21px"><span style="color:#d4d4d4"> </span><span style="color:#d4d4d4"> </span><span style="color:#d4d4d4"> </span><span style="color:#d4d4d4"> </span><span style="color:#d4d4d4">basicHeaderLabel</span><span style="color:#d4d4d4">.</span><span style="color:#d4d4d4">setText</span><span style="color:#179fff">(</span><span style="color:#ce9178">"</span><span class="k" style="color:#ce9178"><i>基</i><i>础</i><i>布</i><i>局</i><i>演</i><i>示</i></span><span style="color:#ce9178">"</span><span style="color:#179fff">)</span><span style="color:#d4d4d4">;</span></div>
<div class="ln" style="top:1061.48px">25</div>
<div class="cl" style="top:1061.48px"><span style="color:#d4d4d4"> </span><span style="color:#d4d4d4"> </span><span style="color:#d4d4d4"> </span><span style="color:#d4d4d4"> </span><span style="color:#d4d4d4">basicHeaderLabel</span><span style="color:#d4d4d4">.</span><span style="color:#d4d4d4">setTextColor</span><span style="color:#179fff">(</span><span style="color:#b5cea8">255</span><span style="color:#d4d4d4">,</span><span style="color:#d4d4d4"> </span><span style="color:#b5cea8">255</span><span style="color:#d4d4d4">,</span><span style="color:#d4d4d4"> </span><span style="color:#b5cea8">255</span><span style="color:#179fff">)</span><span style="color:#d4d4d4">;</span></div>
<div class="ln" style="top:1094.75px">26</div>
<div class="cl" style="top:1094.75px"><span style="color:#d4d4d4"> </span><span style="color:#d4d4d4"> </span><span style="color:#d4d4d4"> </span><span style="color:#d4d4d4"> </span><span style="color:#d4d4d4">basicHeaderLabel</span><span style="color:#d4d4d4">.</span><span style="color:#d4d4d4">setFontSize</span><span style="color:#179fff">(</span><span style="color:#b5cea8">20</span><span style="color:#179fff">)</span><span style="color:#d4d4d4">;</span></div>
<div class="ln" style="top:1128.02px">27</div>
<div class="cl" style="top:1128.02px"><span style="color:#d4d4d4"> </span><span style="color:#d4d4d4"> </span><span style="color:#d4d4d4"> </span><span style="color:#d4d4d4"> </span><span style="color:#d4d4d4">basicHeader</span><span style="color:#d4d4d4">.</span><span style="color:#d4d4d4">addView</span><span style="color:#179fff">(</span><span style="color:#d4d4d4">basicHeaderLabel</span><span style="color:#179fff">)</span><span style="color:#d4d4d4">;</span></div>
<div class="ln" style="top:1161.29px">28</div>
<div class="ln" style="top:1194.56px">29</div>
<div class="cl" style="top:1194.56px"><span style="color:#d4d4d4"> </span><span style="color:#d4d4d4"> </span><span style="color:#d4d4d4"> </span><span style="color:#d4d4d4"> </span><span style="color:#d4d4d4">basicPage</span><span style="color:#d4d4d4">.</span><span style="color:#d4d4d4">addView</span><span style="color:#179fff">(</span><span style="color:#d4d4d4">basicHeader</span><span style="color:#179fff">)</span><span style="color:#d4d4d4">;</span></div>
<div class="ln" style="top:1227.83px">30</div>
<div class="ln" style="top:1261.10px">31</div>
<div class="cl" style="top:1261.10px"><span style="color:#d4d4d4"> </span><span style="color:#d4d4d4"> </span><span style="color:#d4d4d4"> </span><span style="color:#d4d4d4"> </span><span style="color:#569cd6">var</span><span style="color:#d4d4d4"> </span><span style="color:#d4d4d4">basicDesc</span><span style="color:#d4d4d4"> </span><span style="color:#d4d4d4">=</span><span style="color:#d4d4d4"> </span><span style="color:#569cd6">new</span><span style="color:#d4d4d4"> </span><span style="color:#4ec9b0">Label</span><span style="color:#179fff">(</span><span style="color:#179fff">)</span><span style="color:#d4d4d4">;</span></div>
<div class="ln" style="top:1294.37px">32</div>
<div class="cl" style="top:1294.37px"><span style="color:#d4d4d4"> </span><span style="color:#d4d4d4"> </span><span style="color:#d4d4d4"> </span><span style="color:#d4d4d4"> </span><span style="color:#d4d4d4">basicDesc</span><span style="color:#d4d4d4">.</span><span style="color:#d4d4d4">setText</span><span style="color:#179fff">(</span><span style="color:#ce9178">"</span><span class="k" style="color:#ce9178"><i>展</i><i>示</i></span><span style="color:#ce9178">Vertical</span><span class="k" style="color:#ce9178"><i>容</i><i>器</i><i>的</i><i>基</i><i>本</i><i>布</i><i>局</i><i>功</i><i>能</i><i class="p">,</i><i>包</i><i>括</i><i>间</i><i>距</i><i>、</i><i>背</i><i>景</i><i>色</i><i>、</i><i>容</i><i>器</i><i>大</i><i>小</i><i>等</i><i>基</i><i>础</i><i>属</i><i>性</i></span><span style="color:#ce9178">"</span><span style="color:#179fff">)</span><span style="color:#d4d4d4">;</span></div>
<div class="ln" style="top:1327.64px">33</div>
<div class="cl" style="top:1327.64px"><span style="color:#d4d4d4"> </span><span style="color:#d4d4d4"> </span><span style="color:#d4d4d4"> </span><span style="color:#d4d4d4"> </span><span style="color:#d4d4d4">basicDesc</span><span style="color:#d4d4d4">.</span><span style="color:#d4d4d4">setTextColor</span><span style="color:#179fff">(</span><span style="color:#b5cea8">100</span><span style="color:#d4d4d4">,</span><span style="color:#d4d4d4"> </span><span style="color:#b5cea8">100</span><span style="color:#d4d4d4">,</span><span style="color:#d4d4d4"> </span><span style="color:#b5cea8">100</span><span style="color:#179fff">)</span><span style="color:#d4d4d4">;</span></div>
<div class="ln" style="top:1360.91px">34</div>
<div class="cl" style="top:1360.91px"><span style="color:#d4d4d4"> </span><span style="color:#d4d4d4"> </span><span style="color:#d4d4d4"> </span><span style="color:#d4d4d4"> </span><span style="color:#d4d4d4">basicDesc</span><span style="color:#d4d4d4">.</span><span style="color:#d4d4d4">setFontSize</span><span style="color:#179fff">(</span><span style="color:#b5cea8">13</span><span style="color:#179fff">)</span><span style="color:#d4d4d4">;</span></div>
<div class="ln" style="top:1394.18px">35</div>
<div class="cl" style="top:1394.18px"><span style="color:#d4d4d4"> </span><span style="color:#d4d4d4"> </span><span style="color:#d4d4d4"> </span><span style="color:#d4d4d4"> </span><span style="color:#d4d4d4">basicDesc</span><span style="color:#d4d4d4">.</span><span style="color:#d4d4d4">setTextAlignment</span><span style="color:#179fff">(</span><span style="color:#ce9178">"center"</span><span style="color:#179fff">)</span><span style="color:#d4d4d4">;</span></div>
<div class="ln" style="top:1427.45px">36</div>
<div class="cl" style="top:1427.45px"><span style="color:#d4d4d4"> </span><span style="color:#d4d4d4"> </span><span style="color:#d4d4d4"> </span><span style="color:#d4d4d4"> </span><span style="color:#d4d4d4">basicPage</span><span style="color:#d4d4d4">.</span><span style="color:#d4d4d4">addView</span><span style="color:#179fff">(</span><span style="color:#d4d4d4">basicDesc</span><span style="color:#179fff">)</span><span style="color:#d4d4d4">;</span></div>
<div class="ln" style="top:1460.72px">37</div>
<div class="ln" style="top:1493.99px">38</div>
<div class="cl" style="top:1493.99px"><span style="color:#d4d4d4"> </span><span style="color:#d4d4d4"> </span><span style="color:#d4d4d4"> </span><span style="color:#d4d4d4"> </span><span style="color:#569cd6">var</span><span style="color:#d4d4d4"> </span><span style="color:#d4d4d4">basicSection1</span><span style="color:#d4d4d4"> </span><span style="color:#d4d4d4">=</span><span style="color:#d4d4d4"> </span><span style="color:#569cd6">new</span><span style="color:#d4d4d4"> </span><span style="color:#4ec9b0">Horizontal</span><span style="color:#179fff">(</span><span style="color:#179fff">)</span><span style="color:#d4d4d4">;</span></div>
<!-- run log -->
<div class="abs" style="left:660px;top:1530px;width:1882px;height:60px;background:#404040"></div>
<div class="abs" style="left:680px;top:1546px;width:32px;height:32px;background:#e6e6e6;border-radius:4px"></div>
<div class="abs" style="left:686px;top:1552px;width:3px;height:3px;background:#777"></div>
<div class="abs" style="left:692px;top:1552px;width:14px;height:3px;background:#777"></div>
<div class="abs" style="left:686px;top:1560px;width:3px;height:3px;background:#777"></div>
<div class="abs" style="left:692px;top:1560px;width:14px;height:3px;background:#777"></div>
<div class="abs ui" style="left:724px;top:1545px;font-size:23px;line-height:36px;color:#d0d0d0">运行日志</div>
<div class="abs" style="left:841px;top:1543px;width:235px;height:35px;border:1.5px solid #575757;border-radius:3px;background:#404040"></div>
<div class="abs" style="left:842.5px;top:1545.5px;width:180px;height:30px;background:#2d2d2d"></div>
<div class="abs ui" style="left:843px;top:1543px;font-size:23px;line-height:34px;color:#dcdcdc">全部</div>
<div class="abs" style="left:1041px;top:1555px;width:0;height:0;border-left:9px solid transparent;border-right:9px solid transparent;border-top:11px solid #c0c0c0"></div>
<svg class="abs" style="left:1109px;top:1542px" width="34" height="38" viewBox="0 0 34 38" ><path d="M14 11 V5 Q14 2.5 17 2.5 Q20 2.5 20 5 V11 H25 Q30 11 30.5 16 L31 21 H3 L3.5 16 Q4 11 9 11 Z" fill="none" stroke="#3ba0d8" stroke-width="2.6" stroke-linejoin="round"/><path d="M3 21 L1.5 34 Q1.5 35.5 3 35.5 H31 Q32.5 35.5 32.5 34 L31 21 M11 35 L13 26 M21.5 35 L23 26" fill="none" stroke="#3ba0d8" stroke-width="2.6" stroke-linejoin="round"/></svg>
<svg class="abs" style="left:1174px;top:1548px" width="32" height="32" viewBox="0 0 32 32" ><path d="M13 3.5 H5 Q3 3.5 3 5.5 V27 Q3 29 5 29 H27 Q29 29 29 27 V17" fill="none" stroke="#e0e0e0" stroke-width="2.4"/><rect x="19.5" y="2.5" width="9.5" height="9.5" rx="3" fill="none" stroke="#e0e0e0" stroke-width="2.4"/><path d="M6.5 25.5 L16.5 15.5 M9.5 15.5 H16.5 V22.5" fill="none" stroke="#e0e0e0" stroke-width="2.4"/></svg>
<div class="abs" style="left:660px;top:1590px;width:1882px;height:405px;background:#2d2d2d"></div>
<div class="rlog" style="top:1625.0px;left:703.5px">[2026-02-25 12:59:18] <span class="tag">&nbsp;#0&nbsp;</span><span class="c">【</span>String<span class="c">】综合演示<span class="pp">:</span>已添加新项</span></div>
<div class="rlog sys" style="top:1678.2px;left:704px"><span class="c">【系统日志】按下</span>{X=534,Y=577}</div>
<div class="rlog" style="top:1731.4px;left:703.5px">[2026-02-25 12:59:19] <span class="tag">&nbsp;#0&nbsp;</span><span class="c">【</span>String<span class="c">】综合演示<span class="pp">:</span>已清空所有控件</span></div>
<div class="rlog sys" style="top:1784.6px;left:704px"><span class="c">【系统日志】按下</span>{X=526,Y=96}</div>
<div class="rlog sys" style="top:1837.8px;left:704px"><span class="c">【系统日志】按下</span>{X=372,Y=102}</div>
<div class="rlog sys" style="top:1891.0px;left:704px"><span class="c">【系统日志】按下</span>{X=347,Y=500}</div>
<div class="rlog" style="top:1944.2px;left:703.5px">[2026-02-25 12:59:54] <span class="tag">&nbsp;#0&nbsp;</span><span class="c">【</span>String<span class="c">】已添加控件<span class="pp">,</span>当前数量</span>: 5</div>
<!-- bottom bar -->
<div class="abs" style="left:0;top:1995px;width:2542px;height:1px;background:#272727"></div>
<div class="abs" style="left:0;top:1996px;width:2542px;height:13px;background:#404040"></div>
</body></html>
